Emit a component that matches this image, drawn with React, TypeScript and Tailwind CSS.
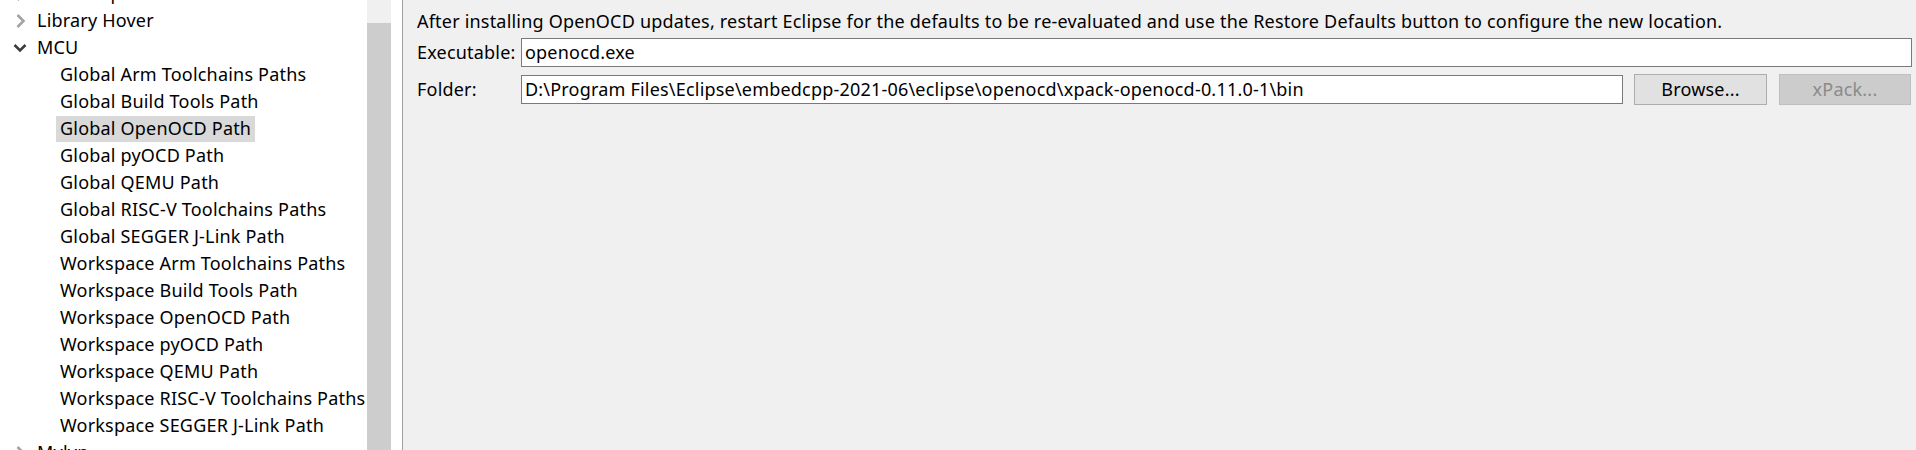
import React from 'react';

type Row = {
  label: string;
  level: 0 | 1;
  chevron?: 'right' | 'down';
  selected?: boolean;
};

const children = [
  'Global Arm Toolchains Paths',
  'Global Build Tools Path',
  'Global OpenOCD Path',
  'Global pyOCD Path',
  'Global QEMU Path',
  'Global RISC-V Toolchains Paths',
  'Global SEGGER J-Link Path',
  'Workspace Arm Toolchains Paths',
  'Workspace Build Tools Path',
  'Workspace OpenOCD Path',
  'Workspace pyOCD Path',
  'Workspace QEMU Path',
  'Workspace RISC-V Toolchains Paths',
  'Workspace SEGGER J-Link Path',
];

const rows: Row[] = [
  { label: 'Install/Update', level: 0, chevron: 'right' },
  { label: 'Library Hover', level: 0, chevron: 'right' },
  { label: 'MCU', level: 0, chevron: 'down' },
  ...children.map((label) => ({
    label,
    level: 1 as const,
    selected: label === 'Global OpenOCD Path',
  })),
  { label: 'Mylyn', level: 0, chevron: 'right' },
];

const Chevron: React.FC<{ dir: 'right' | 'down' }> = ({ dir }) =>
  dir === 'right' ? (
    <svg width="14" height="14" viewBox="0 0 14 14" className="shrink-0">
      <path d="M4.5 1 L10.5 7 L4.5 13" fill="none" stroke="#a3a3a3" strokeWidth="2.6" />
    </svg>
  ) : (
    <svg width="14" height="14" viewBox="0 0 14 14" className="shrink-0">
      <path d="M1.5 4 L7 9.5 L12.5 4" fill="none" stroke="#3c3c3c" strokeWidth="2.6" />
    </svg>
  );

const TreeRow: React.FC<{ row: Row }> = ({ row }) => (
  <div className="flex h-[27px] items-center">
    {row.level === 0 ? (
      <div className="flex items-center pl-[13px]">
        <Chevron dir={row.chevron ?? 'right'} />
        <span className="ml-[10px] whitespace-nowrap">{row.label}</span>
      </div>
    ) : (
      <div
        className={`ml-[56px] flex h-[26px] items-center whitespace-nowrap px-[4px] ${
          row.selected ? 'bg-[#d9d9d9]' : ''
        }`}
      >
        {row.label}
      </div>
    )}
  </div>
);

export default function App() {
  return (
    <div className="flex h-[450px] w-[1916px] overflow-hidden bg-white font-['Noto_Sans',sans-serif] text-[18px] tracking-[0.2px] text-black">
      {/* preference tree */}
      <div className="h-[450px] w-[367px] shrink-0 overflow-hidden bg-white">
        <div className="mt-[-20px] flex flex-col">
          {rows.map((row) => (
            <TreeRow key={row.label} row={row} />
          ))}
        </div>
      </div>

      {/* scrollbar */}
      <div className="flex w-[24px] shrink-0 flex-col bg-[#f0f0f0]">
        <div className="h-[23px]" />
        <div className="flex-1 bg-[#cdcdcd]" />
      </div>
      <div className="w-[11px] shrink-0 bg-white" />
      <div className="w-px shrink-0 bg-[#a0a0a0]" />

      {/* page */}
      <div className="flex flex-1 flex-col bg-[#f0f0f0] pl-[14px] pr-[4px]">
        <div className="pt-[8px] leading-[27px] whitespace-nowrap">
          After installing OpenOCD updates, restart Eclipse for the defaults to be re-evaluated and use the Restore
          Defaults button to configure the new location.
        </div>

        <div className="mt-[3px] flex h-[29px] items-center">
          <div className="w-[104px] shrink-0">Executable:</div>
          <div className="flex h-full flex-1 items-center border border-[#7a7a7a] bg-white px-[3px]">openocd.exe</div>
        </div>

        <div className="mt-[8px] flex h-[29px] items-center">
          <div className="w-[104px] shrink-0">Folder:</div>
          <div className="flex h-full w-[1102px] shrink-0 items-center whitespace-nowrap border border-[#7a7a7a] bg-white px-[3px]">
            D:\Program Files\Eclipse\embedcpp-2021-06\eclipse\openocd\xpack-openocd-0.11.0-1\bin
          </div>
          <button className="ml-[11px] flex h-[31px] w-[133px] items-center justify-center border border-[#adadad] bg-[#e1e1e1]">
            Browse...
          </button>
          <button
            disabled
            className="ml-[12px] flex h-[31px] w-[132px] items-center justify-center border border-[#bfbfbf] bg-[#cccccc] text-[#8a8a8a]"
          >
            xPack...
          </button>
        </div>
      </div>
    </div>
  );
}
